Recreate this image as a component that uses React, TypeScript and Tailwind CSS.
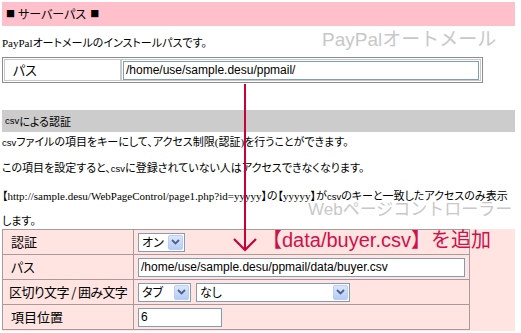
import React from "react";

const jp = "font-['Noto_Sans_CJK_JP',sans-serif]";
const body = "font-['Liberation_Serif','Noto_Sans_CJK_JP',serif]";
const arial = "font-['Liberation_Sans','Noto_Sans_CJK_JP',sans-serif]";

function Csv() {
  return <span className={`${arial} text-[9.5px]`}>csv</span>;
}

function Chevron() {
  return (
    <svg width="9" height="6" viewBox="0 0 9 6">
      <path d="M1 1 L4.5 4.5 L8 1" fill="none" stroke="#4d6185" strokeWidth="1.8" />
    </svg>
  );
}

function Select({ label, width }: { label: string; width: string }) {
  return (
    <div className={`${width} h-[19px] bg-white border border-[#7f9db9] flex items-center justify-between`}>
      <span className={`${jp} text-[12px] pl-[3px] leading-none [font-feature-settings:'palt']`}>{label}</span>
      <div className="w-[15px] h-[15px] mr-[1px] rounded-[2px] bg-gradient-to-b from-[#dbe6fd] to-[#b6cbf6] border border-[#b9cdf5] flex items-center justify-center">
        <Chevron />
      </div>
    </div>
  );
}

function Input({ value, width }: { value: string; width: string }) {
  return (
    <div className={`${width} h-[19px] bg-white border border-[#7f9db9] flex items-center ${arial} text-[12px] pl-[2px] text-black whitespace-nowrap`}>
      {value}
    </div>
  );
}

export default function App() {
  return (
    <div className={`relative w-[521px] h-[333px] bg-white overflow-hidden text-black ${jp}`}>
      <div className="pt-[2px] pl-[2px] pr-[6px]">
        <div className={`h-[24px] bg-[#ffc0cb] flex items-center pl-[4px] text-[12px] ${jp} [font-feature-settings:'palt']`}>
          <span className="text-[9px] mr-[3px]">■</span>サーバーパス<span className="text-[9px] ml-[4px]">■</span>
        </div>
        <div className={`mt-[9px] h-[16px] leading-[16px] text-[11px] ${body} [font-feature-settings:'palt']`}>
          PayPalオートメールのインストールパスです。
        </div>
        <div className="mt-[6px] w-[481px] h-[26px] border border-[#8c8c8c] flex p-[1px]">
          <div className={`w-[117px] border border-[#c8c8c8] flex items-center pl-[8px] text-[13px] ${jp} [font-feature-settings:'palt']`}>
            パス
          </div>
          <div className="flex-1 border border-[#c8c8c8] flex items-center pl-[1px]">
            <Input value="/home/use/sample.desu/ppmail/" width="w-[356px]" />
          </div>
        </div>
        <div className={`mt-[27px] h-[22px] bg-[#cccccc] flex items-center pl-[3px] text-[11px] ${jp} [font-feature-settings:'palt']`}>
          <Csv />による認証
        </div>
        <div className={`text-[11px] ${body} [font-feature-settings:'palt'] whitespace-nowrap`}>
          <div className="h-[20px] leading-[20px]">
            <Csv />ファイルの項目をキーにして、アクセス制限(認証)を行うことができます。
          </div>
          <div className="mt-[6px] h-[20px] leading-[20px]">
            この項目を設定すると、<Csv />に登録されていない人はアクセスできなくなります。
          </div>
          <div className="mt-[6px] leading-[24px]">
            【http://sample.desu/WebPageControl/page1.php?id=yyyyy】の【yyyyy】が<Csv />のキーと一致したアクセスのみ表示
            <br />
            します。
          </div>
        </div>
      </div>

      <div className="ml-[2px] mr-[6px] mt-[-4px] bg-[#ffe4e1] h-[102px]">
        <div className={`w-[468px] border border-[#a89a9a] text-[13px] ${jp} [font-feature-settings:'palt']`}>
          <div className="h-[25px] flex border-b border-[#a89a9a]">
            <div className="w-[131px] border-r border-[#a89a9a] flex items-center pl-[8px]">認証</div>
            <div className="flex-1 flex items-center pl-[4px]">
              <Select label="オン" width="w-[47px]" />
            </div>
          </div>
          <div className="h-[25px] flex border-b border-[#a89a9a]">
            <div className="w-[131px] border-r border-[#a89a9a] flex items-center pl-[8px]">パス</div>
            <div className="flex-1 flex items-center pl-[4px]">
              <Input value="/home/use/sample.desu/ppmail/data/buyer.csv" width="w-[327px]" />
            </div>
          </div>
          <div className="h-[25px] flex border-b border-[#a89a9a]">
            <div className="w-[131px] border-r border-[#a89a9a] flex items-center pl-[6px] whitespace-nowrap tracking-[-0.6px]">区切り文字 / 囲み文字</div>
            <div className="flex-1 flex items-center pl-[4px] gap-[5px]">
              <Select label="タブ" width="w-[53px]" />
              <Select label="なし" width="w-[154px]" />
            </div>
          </div>
          <div className="h-[24px] flex">
            <div className="w-[131px] border-r border-[#a89a9a] flex items-center pl-[8px]">項目位置</div>
            <div className="flex-1 flex items-center pl-[4px]">
              <Input value="6" width="w-[84px]" />
            </div>
          </div>
        </div>
      </div>

      <div className={`absolute left-[322px] top-[27px] text-[19px] leading-[26px] text-[#c8c8c8] whitespace-nowrap ${arial}`}>
        PayPalオートメール
      </div>
      <div className={`absolute left-[308px] top-[197px] text-[17px] leading-[26px] text-[#c8c8c8] whitespace-nowrap ${arial}`}>
        Webページコントローラー
      </div>
      <svg className="absolute left-0 top-0 pointer-events-none" width="521" height="333">
        <line x1="245" y1="84" x2="245" y2="250" stroke="#c8003c" strokeWidth="2" />
        <path d="M234 239 L245 250 L256 239" fill="none" stroke="#c8003c" strokeWidth="2.2" />
      </svg>
      <div className={`absolute left-[262px] top-[227px] text-[20px] leading-[26px] text-[#d0104a] ${arial} whitespace-nowrap`}>
        【data/buyer.csv】を追加
      </div>
    </div>
  );
}
